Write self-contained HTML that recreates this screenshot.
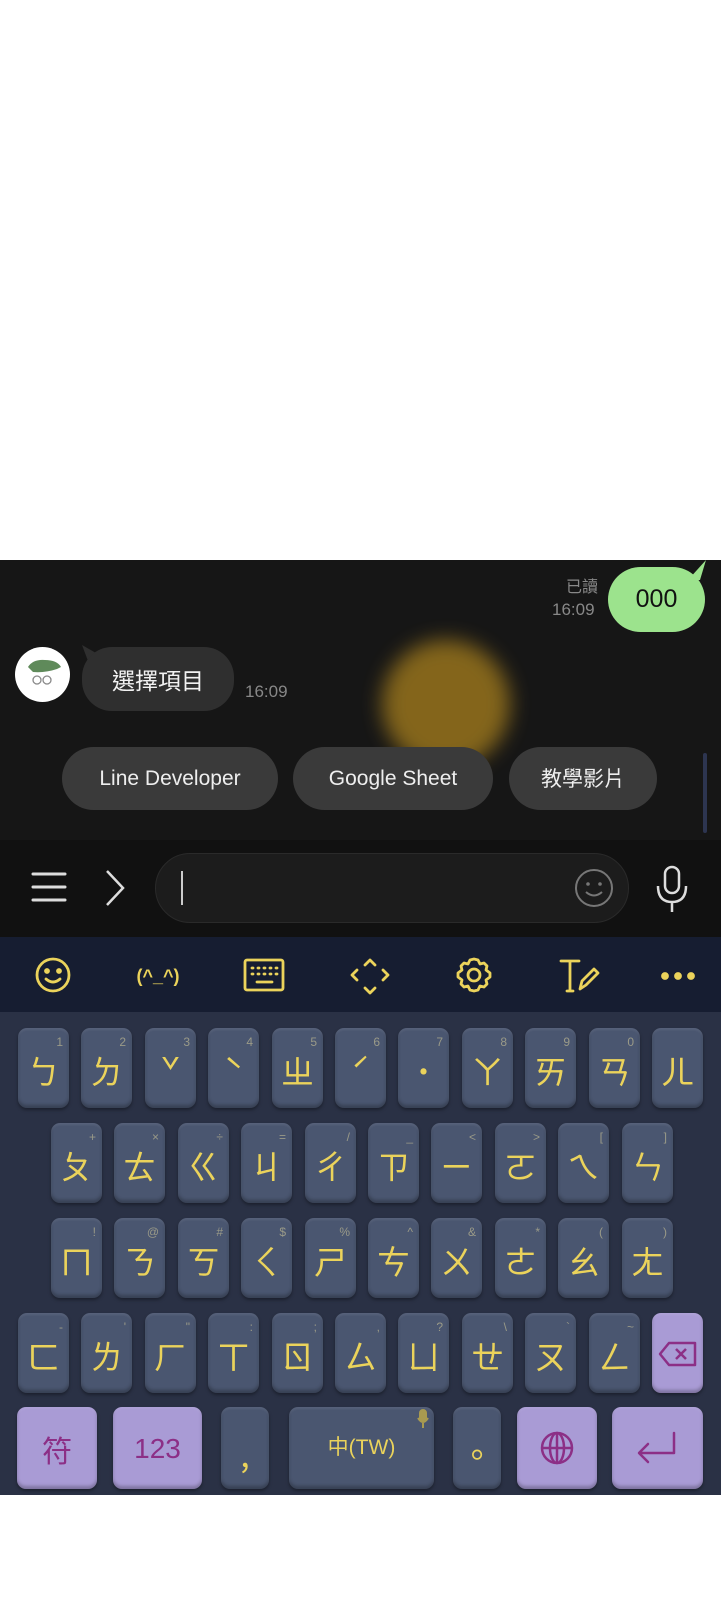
<!DOCTYPE html>
<html><head><meta charset="utf-8">
<style>
*{margin:0;padding:0;box-sizing:border-box}
body{width:721px;height:1600px;background:#fff;position:relative;overflow:hidden;font-family:"Liberation Sans","Noto Sans CJK TC",sans-serif}
.a{position:absolute}
#chat{left:0;top:560px;width:721px;height:280px;background:#161616}
#bar{left:0;top:840px;width:721px;height:97px;background:#111}
#tb{left:0;top:937px;width:721px;height:75px;background:#161d31}
#kb{left:0;top:1012px;width:721px;height:483px;background:#2a3145}
.k{position:absolute;width:51px;height:80px;border-radius:9px;background:#4a5670;box-shadow:inset 0 -3px 3px rgba(0,0,0,.25),inset 0 2px 2px rgba(255,255,255,.08),0 2px 3px rgba(0,0,0,.35);color:#ebd35b}
.k b{position:absolute;left:0;right:0;top:22px;text-align:center;font-weight:normal;font-size:33px;line-height:40px;font-family:"Noto Sans CJK TC",sans-serif}
.k i{position:absolute;right:6px;top:7px;font-style:normal;font-size:12px;color:#9a9a88}
.p{background:#a99bd5;color:#8c2f86}
.qr{position:absolute;top:747px;height:63px;border-radius:32px;background:#3a3a3a;color:#eee;font-size:21px;line-height:63px;text-align:center}
</style></head><body>
<div class="a" id="chat"></div>
<div class="a" style="left:382px;top:640px;width:128px;height:128px;border-radius:50%;background:#8a6a1c;filter:blur(10px);opacity:.95"></div>
<div class="a" style="left:566px;top:575px;color:#888;font-size:16px;font-family:'Noto Sans CJK TC',sans-serif;line-height:20px">已讀</div>
<div class="a" style="left:552px;top:600px;color:#888;font-size:17px;line-height:20px">16:09</div>
<div class="a" style="left:608px;top:567px;width:97px;height:65px;border-radius:33px;background:#9ce38d;color:#111;font-size:25px;line-height:65px;text-align:center">000</div>
<svg class="a" style="left:688px;top:560px" width="20" height="20"><path d="M0 20 L18 0 L12 20Z" fill="#9ce38d"/></svg>
<div class="a" style="left:15px;top:647px;width:55px;height:55px;border-radius:50%;background:#fff"></div>
<svg class="a" style="left:15px;top:647px" width="55" height="55"><path d="M13 20 Q18 12 30 13 Q42 13 46 20 L42 22 Q30 26 18 25Z" fill="#5f8a5a"/><circle cx="22" cy="33" r="4" fill="none" stroke="#888" stroke-width="1.3"/><circle cx="32" cy="33" r="4" fill="none" stroke="#888" stroke-width="1.3"/></svg>
<svg class="a" style="left:80px;top:645px" width="20" height="20"><path d="M2 0 L16 8 L8 16Z" fill="#2f2f2f"/></svg>
<div class="a" style="left:82px;top:647px;width:152px;height:64px;border-radius:30px;background:#2f2f2f;color:#f2f2f2;font-size:23px;line-height:64px;text-align:center;font-family:'Noto Sans CJK TC',sans-serif">選擇項目</div>
<div class="a" style="left:245px;top:682px;color:#888;font-size:17px;line-height:20px">16:09</div>
<div class="qr" style="left:62px;width:216px">Line Developer</div>
<div class="qr" style="left:293px;width:200px">Google Sheet</div>
<div class="qr" style="left:509px;width:148px;font-family:'Noto Sans CJK TC',sans-serif">教學影片</div>
<div class="a" style="left:703px;top:753px;width:4px;height:80px;border-radius:2px;background:#2d3550"></div>

<div class="a" id="bar"></div>
<svg class="a" style="left:30px;top:870px" width="40" height="36"><g stroke="#ddd" stroke-width="3" stroke-linecap="round"><line x1="3" y1="4" x2="35" y2="4"/><line x1="3" y1="17" x2="35" y2="17"/><line x1="3" y1="30" x2="35" y2="30"/></g></svg>
<svg class="a" style="left:104px;top:868px" width="24" height="40"><path d="M3 3 L19 20 L3 37" fill="none" stroke="#ddd" stroke-width="2.5"/></svg>
<div class="a" style="left:155px;top:853px;width:474px;height:70px;border-radius:35px;background:#1c1c1c;border:1px solid #2a2a2a"></div>
<div class="a" style="left:181px;top:871px;width:2px;height:34px;background:#ccc"></div>
<svg class="a" style="left:574px;top:868px" width="40" height="40"><circle cx="20" cy="20" r="18" fill="none" stroke="#777" stroke-width="2"/><circle cx="14" cy="16" r="1.8" fill="#777"/><circle cx="26" cy="16" r="1.8" fill="#777"/><path d="M12 24 Q20 31 28 24" fill="none" stroke="#777" stroke-width="2"/></svg>
<svg class="a" style="left:654px;top:864px" width="36" height="50"><rect x="11" y="3" width="14" height="26" rx="7" fill="none" stroke="#ddd" stroke-width="2.5"/><path d="M4 22 Q4 38 18 38 Q32 38 32 22 M18 38 V48" fill="none" stroke="#ddd" stroke-width="2.5"/></svg>

<div class="a" id="tb"></div>
<svg class="a" style="left:0;top:937px" width="721" height="75" fill="none" stroke="#ebd35b" stroke-width="2.8" stroke-linecap="round" stroke-linejoin="round">
<circle cx="53" cy="38" r="16"/><circle cx="47" cy="34" r="1.5" fill="#ebd35b"/><circle cx="59" cy="34" r="1.5" fill="#ebd35b"/><path d="M46 42 Q53 48 60 42"/>
<text x="158" y="45" fill="#ebd35b" stroke="none" font-size="18" text-anchor="middle" font-family="Liberation Sans" font-weight="bold">(^_^)</text>
<rect x="245" y="23" width="38" height="30" rx="2"/><path d="M252 31h1M258 31h1M264 31h1M270 31h1M276 31h1M252 37h1M258 37h1M264 37h1M270 37h1M276 37h1M257 45h15"/>
<path d="M365 28l5-5 5 5M365 51l5 5 5-5M357 33l-5 5 5 5M383 33l5 5-5 5"/>
<circle cx="474" cy="38" r="6"/><path d="M474 22l4 1 2 4 4-1 3 3-1 4 4 3v4l-4 3 1 4-3 3-4-1-2 4-4 1-4-1-2-4-4 1-3-3 1-4-4-3v-4l4-3-1-4 3-3 4 1 2-4z"/>
<path d="M561 24h18M570 24v30M567 54h6M580 52l2-8 12-12 4 4-12 12z"/>
<circle cx="665" cy="39" r="2.5" fill="#ebd35b"/><circle cx="678" cy="39" r="2.5" fill="#ebd35b"/><circle cx="691" cy="39" r="2.5" fill="#ebd35b"/>
</svg>

<div class="a" id="kb"></div>
<div class="k" style="left:18px;top:1028px"><i>1</i><b>ㄅ</b></div>
<div class="k" style="left:81px;top:1028px"><i>2</i><b>ㄉ</b></div>
<div class="k" style="left:145px;top:1028px"><i>3</i><b>ˇ</b></div>
<div class="k" style="left:208px;top:1028px"><i>4</i><b>ˋ</b></div>
<div class="k" style="left:272px;top:1028px"><i>5</i><b>ㄓ</b></div>
<div class="k" style="left:335px;top:1028px"><i>6</i><b>ˊ</b></div>
<div class="k" style="left:398px;top:1028px"><i>7</i><b>˙</b></div>
<div class="k" style="left:462px;top:1028px"><i>8</i><b>ㄚ</b></div>
<div class="k" style="left:525px;top:1028px"><i>9</i><b>ㄞ</b></div>
<div class="k" style="left:589px;top:1028px"><i>0</i><b>ㄢ</b></div>
<div class="k" style="left:652px;top:1028px"><b>ㄦ</b></div>
<div class="k" style="left:51px;top:1123px"><i>+</i><b>ㄆ</b></div>
<div class="k" style="left:114px;top:1123px"><i>×</i><b>ㄊ</b></div>
<div class="k" style="left:178px;top:1123px"><i>÷</i><b>ㄍ</b></div>
<div class="k" style="left:241px;top:1123px"><i>=</i><b>ㄐ</b></div>
<div class="k" style="left:305px;top:1123px"><i>/</i><b>ㄔ</b></div>
<div class="k" style="left:368px;top:1123px"><i>_</i><b>ㄗ</b></div>
<div class="k" style="left:431px;top:1123px"><i>&lt;</i><b>ㄧ</b></div>
<div class="k" style="left:495px;top:1123px"><i>&gt;</i><b>ㄛ</b></div>
<div class="k" style="left:558px;top:1123px"><i>[</i><b>ㄟ</b></div>
<div class="k" style="left:622px;top:1123px"><i>]</i><b>ㄣ</b></div>
<div class="k" style="left:51px;top:1218px"><i>!</i><b>ㄇ</b></div>
<div class="k" style="left:114px;top:1218px"><i>@</i><b>ㄋ</b></div>
<div class="k" style="left:178px;top:1218px"><i>#</i><b>ㄎ</b></div>
<div class="k" style="left:241px;top:1218px"><i>$</i><b>ㄑ</b></div>
<div class="k" style="left:305px;top:1218px"><i>%</i><b>ㄕ</b></div>
<div class="k" style="left:368px;top:1218px"><i>^</i><b>ㄘ</b></div>
<div class="k" style="left:431px;top:1218px"><i>&amp;</i><b>ㄨ</b></div>
<div class="k" style="left:495px;top:1218px"><i>*</i><b>ㄜ</b></div>
<div class="k" style="left:558px;top:1218px"><i>(</i><b>ㄠ</b></div>
<div class="k" style="left:622px;top:1218px"><i>)</i><b>ㄤ</b></div>
<div class="k" style="left:18px;top:1313px"><i>-</i><b>ㄈ</b></div>
<div class="k" style="left:81px;top:1313px"><i>'</i><b>ㄌ</b></div>
<div class="k" style="left:145px;top:1313px"><i>"</i><b>ㄏ</b></div>
<div class="k" style="left:208px;top:1313px"><i>:</i><b>ㄒ</b></div>
<div class="k" style="left:272px;top:1313px"><i>;</i><b>ㄖ</b></div>
<div class="k" style="left:335px;top:1313px"><i>,</i><b>ㄙ</b></div>
<div class="k" style="left:398px;top:1313px"><i>?</i><b>ㄩ</b></div>
<div class="k" style="left:462px;top:1313px"><i>\</i><b>ㄝ</b></div>
<div class="k" style="left:525px;top:1313px"><i>`</i><b>ㄡ</b></div>
<div class="k" style="left:589px;top:1313px"><i>~</i><b>ㄥ</b></div>
<div class="k p" style="left:652px;top:1313px"><svg style="position:absolute;left:6px;top:26px" width="40" height="30" fill="none" stroke="#8c2f86" stroke-width="2.5" stroke-linejoin="round"><path d="M2 15 L11 4 H37 V26 H11 Z"/><path d="M18 10 L28 20 M28 10 L18 20"/></svg></div>
<div class="k p" style="left:17px;top:1407px;width:80px;height:82px"><b style="color:#8c2f86;font-size:30px">符</b></div>
<div class="k p" style="left:113px;top:1407px;width:89px;height:82px"><b style="color:#8c2f86;font-family:'Liberation Sans',sans-serif;font-size:28px">123</b></div>
<div class="k" style="left:221px;top:1407px;width:48px;height:82px"><b style="top:26px">,</b></div>
<div class="k" style="left:289px;top:1407px;width:145px;height:82px"><b style="font-size:21px;top:21px;font-family:'Liberation Sans','Noto Sans CJK TC',sans-serif">中(TW)</b><svg style="position:absolute;right:5px;top:2px" width="12" height="20" fill="none" stroke="#a89a50" stroke-width="2"><rect x="3" y="1" width="6" height="11" rx="3" fill="#a89a50"/><path d="M1 9 Q6 17 11 9 M6 14 V19"/></svg></div>
<div class="k" style="left:453px;top:1407px;width:48px;height:82px"><b style="top:26px">。</b></div>
<div class="k p" style="left:517px;top:1407px;width:80px;height:82px"><svg style="position:absolute;left:22px;top:23px" width="36" height="36" fill="none" stroke="#8c2f86" stroke-width="2.5"><circle cx="18" cy="18" r="15"/><ellipse cx="18" cy="18" rx="7" ry="15"/><path d="M3 18 H33 M18 3 V33"/></svg></div>
<div class="k p" style="left:612px;top:1407px;width:91px;height:82px"><svg style="position:absolute;left:24px;top:24px" width="44" height="36" fill="none" stroke="#8c2f86" stroke-width="2.5" stroke-linecap="round" stroke-linejoin="round"><path d="M38 2 V22 H4 M12 13 L3 22 L12 31"/></svg></div>
</body></html>
